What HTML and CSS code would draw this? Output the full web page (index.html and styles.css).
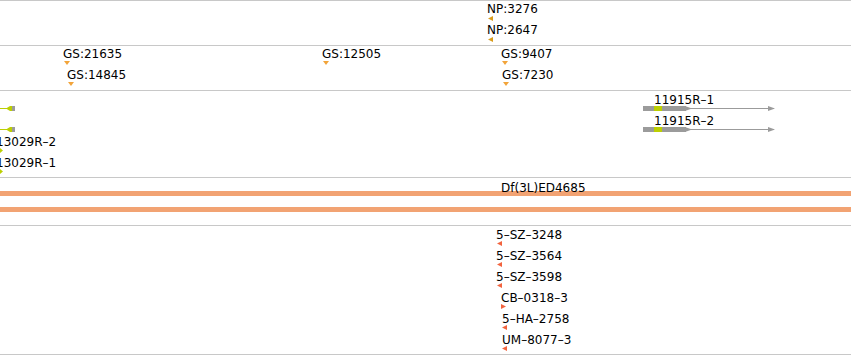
FILE: index.html
```html
<!DOCTYPE html>
<html>
<head>
  <title>Track view</title>
  <link rel="stylesheet" href="styles.css">
</head>
<body>

<div id="tracks">

  <!-- NP insertions -->
  <div class="track t-np">
    <div class="row">
      <div class="feat" style="left:488px"><div class="lbl">NP:3276</div><svg class="mk" width="5" height="5"><polygon class="c-np" points="5,0 0,2.5 5,5"/></svg></div>
    </div>
    <div class="row">
      <div class="feat" style="left:488px"><div class="lbl">NP:2647</div><svg class="mk" width="5" height="5"><polygon class="c-np" points="5,0 0,2.5 5,5"/></svg></div>
    </div>
  </div>

  <!-- GS insertions -->
  <div class="track t-gs">
    <div class="row">
      <div class="feat" style="left:64px"><div class="lbl">GS:21635</div><svg class="mk" width="6" height="4"><polygon class="c-gs" points="0,0 6,0 3,4"/></svg></div>
      <div class="feat" style="left:323px"><div class="lbl">GS:12505</div><svg class="mk" width="6" height="4"><polygon class="c-gs" points="0,0 6,0 3,4"/></svg></div>
      <div class="feat" style="left:502px"><div class="lbl">GS:9407</div><svg class="mk" width="6" height="4"><polygon class="c-gs" points="0,0 6,0 3,4"/></svg></div>
    </div>
    <div class="row">
      <div class="feat" style="left:68px"><div class="lbl">GS:14845</div><svg class="mk" width="6" height="4"><polygon class="c-gs" points="0,0 6,0 3,4"/></svg></div>
      <div class="feat" style="left:503px"><div class="lbl">GS:7230</div><svg class="mk" width="6" height="4"><polygon class="c-gs" points="0,0 6,0 3,4"/></svg></div>
    </div>
  </div>

  <!-- transcripts -->
  <div class="track t-gene">
    <div class="row">
      <div class="feat" style="left:0px"><div class="lbl"></div>
        <svg class="mk" width="16" height="5">
          <line x1="0" y1="2.5" x2="7" y2="2.5" stroke="#bccf02"/>
          <polygon points="6,2.5 10,0 12,0 12,5 10,5" fill="#bccf02"/>
          <rect x="12" y="0" width="3" height="5" fill="#9b9b9b"/>
        </svg>
      </div>
      <div class="feat" style="left:643px"><div class="lbl gene-lbl">11915R–1</div>
        <svg class="mk" width="136" height="5">
          <line x1="42" y1="2.5" x2="131" y2="2.5" stroke="#9b9b9b"/>
          <rect x="0" y="0" width="43" height="5" fill="#9b9b9b"/>
          <rect x="11" y="0" width="8" height="5" fill="#bccf02"/>
          <polygon points="42,0 49,2.5 42,5" fill="#9b9b9b"/>
          <polygon points="125,0 132,2.5 125,5" fill="#9b9b9b"/>
        </svg>
      </div>
    </div>
    <div class="row">
      <div class="feat" style="left:0px"><div class="lbl"></div>
        <svg class="mk" width="16" height="5">
          <line x1="0" y1="2.5" x2="7" y2="2.5" stroke="#bccf02"/>
          <polygon points="6,2.5 10,0 12,0 12,5 10,5" fill="#bccf02"/>
          <rect x="12" y="0" width="3" height="5" fill="#9b9b9b"/>
        </svg>
      </div>
      <div class="feat" style="left:643px"><div class="lbl gene-lbl">11915R–2</div>
        <svg class="mk" width="136" height="5">
          <line x1="42" y1="2.5" x2="131" y2="2.5" stroke="#9b9b9b"/>
          <rect x="0" y="0" width="43" height="5" fill="#9b9b9b"/>
          <rect x="11" y="0" width="8" height="5" fill="#bccf02"/>
          <polygon points="42,0 49,2.5 42,5" fill="#9b9b9b"/>
          <polygon points="125,0 132,2.5 125,5" fill="#9b9b9b"/>
        </svg>
      </div>
    </div>
    <div class="row">
      <div class="feat" style="left:0px"><div class="lbl clip-lbl">13029R–2</div><svg class="mk" width="4" height="5"><polygon points="0,0 3,2.5 0,5" fill="#bccf02"/></svg></div>
    </div>
    <div class="row">
      <div class="feat" style="left:0px"><div class="lbl clip-lbl">13029R–1</div><svg class="mk" width="4" height="5"><polygon points="0,0 3,2.5 0,5" fill="#bccf02"/></svg></div>
    </div>
  </div>

  <!-- deficiencies -->
  <div class="track t-df">
    <div class="df-row">
      <div class="df-bar"></div>
      <div class="feat" style="left:502px"><div class="lbl">Df(3L)ED4685</div></div>
    </div>
    <div class="df-row">
      <div class="df-bar"></div>
    </div>
  </div>

  <!-- alleles -->
  <div class="track t-al">
    <div class="row">
      <div class="feat" style="left:497px"><div class="lbl">5–SZ–3248</div><svg class="mk" width="5" height="5"><polygon class="c-al" points="5,0 0,2.5 5,5"/></svg></div>
    </div>
    <div class="row">
      <div class="feat" style="left:497px"><div class="lbl">5–SZ–3564</div><svg class="mk" width="5" height="5"><polygon class="c-al" points="5,0 0,2.5 5,5"/></svg></div>
    </div>
    <div class="row">
      <div class="feat" style="left:497px"><div class="lbl">5–SZ–3598</div><svg class="mk" width="5" height="5"><polygon class="c-al" points="5,0 0,2.5 5,5"/></svg></div>
    </div>
    <div class="row">
      <div class="feat" style="left:501px"><div class="lbl flat">CB–0318–3</div><svg class="mk" width="5" height="5"><polygon class="c-al" points="0,0 5,2.5 0,5"/></svg></div>
    </div>
    <div class="row">
      <div class="feat" style="left:502px"><div class="lbl flat">5–HA–2758</div><svg class="mk" width="5" height="5"><polygon class="c-al" points="5,0 0,2.5 5,5"/></svg></div>
    </div>
    <div class="row">
      <div class="feat" style="left:502px"><div class="lbl flat">UM–8077–3</div><svg class="mk" width="5" height="5"><polygon class="c-al" points="5,0 0,2.5 5,5"/></svg></div>
    </div>
  </div>

</div>

</body>
</html>
```

FILE: styles.css
```css
body {
  margin: 0;
  padding: 0;
  background-color: white;
  font-family: "DejaVu Sans", sans-serif;
  font-size: 12px;
  color: black;
  overflow: hidden;
}

#tracks {
  width: 851px;
}

.track {
  position: relative;
  overflow: hidden;
  border-top: 1px solid #c8c8c8;
}

.t-np, .t-gs {
  padding: 1px 0;
}

.t-gene {
  padding-top: 2px;
}

.t-df {
  height: 44px;
  padding-top: 3px;
}

.t-al {
  padding-top: 2px;
  border-bottom: 1px solid #c8c8c8;
}

.row {
  position: relative;
  height: 21px;
}

.feat {
  position: absolute;
  top: 0;
}

.lbl {
  height: 14px;
  line-height: 14px;
  margin-left: -1px;
  white-space: nowrap;
}

.t-gene .lbl, .t-al .lbl {
  height: 13px;
}

.lbl.flat {
  margin-left: 0;
}

.gene-lbl {
  margin-left: 11px;
}

.clip-lbl {
  margin-left: -4px;
}

.mk {
  display: block;
}

.c-np { fill: #d99c1b; }
.c-gs { fill: #f2a43a; }
.c-al { fill: #f2643f; }

.df-row {
  position: relative;
  height: 6px;
  padding-top: 10px;
}

.df-bar {
  height: 5px;
  background-color: #f2a373;
}
```
